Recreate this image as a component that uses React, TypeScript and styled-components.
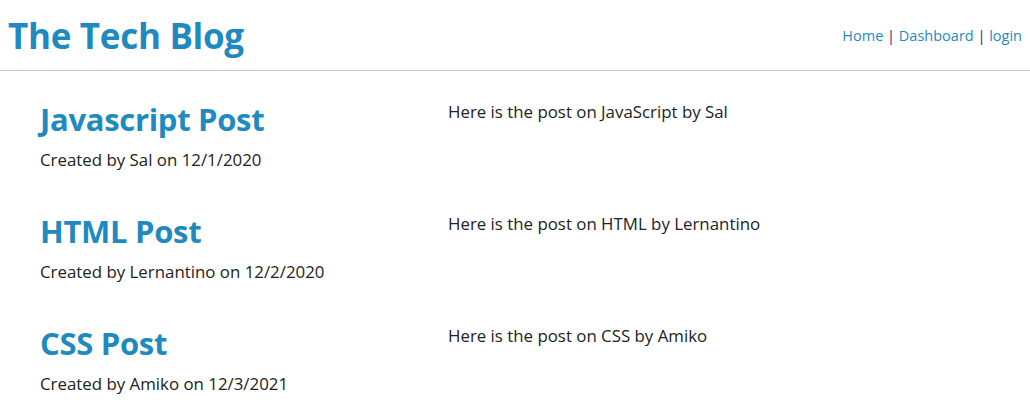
import React from "react";
import styled, { createGlobalStyle } from "styled-components";

const Global = createGlobalStyle`
  html, body { margin: 0; padding: 0; background: #fff; }
  body { font-family: "Open Sans", "Noto Sans", sans-serif; color: #222; }
`;

const Header = styled.header`
  display: flex;
  align-items: center;
  justify-content: space-between;
  height: 70px;
  padding: 0 8px;
  border-bottom: 1px solid #cccccc;
`;

const Brand = styled.h1`
  margin: 0;
  font-size: 35px;
  font-weight: 700;
  color: #1f8ac0;
  letter-spacing: -0.3px;
`;

const Nav = styled.nav`
  font-size: 14.5px;
  color: #3a1a5a;
`;

const NavLink = styled.a`
  color: #1f8ac0;
  text-decoration: none;
`;

const Posts = styled.main`
  display: flex;
  flex-direction: column;
  padding: 26px 40px 0;
`;

const PostRow = styled.article`
  display: grid;
  grid-template-columns: 408px 1fr;
  height: 112px;
`;

const PostHead = styled.div`
  display: flex;
  flex-direction: column;
`;

const PostTitle = styled.h2`
  margin: 0;
  font-size: 31px;
  font-weight: 700;
  color: #1f8ac0;
  line-height: 44px;
  letter-spacing: -0.3px;
`;

const Meta = styled.p`
  margin: 8px 0 0;
  font-size: 16.85px;
  line-height: 22px;
`;

const Body = styled.p`
  margin: 0;
  padding-top: 4px;
  font-size: 16.85px;
  line-height: 22px;
`;

const posts = [
  { title: "Javascript Post", meta: "Created by Sal on 12/1/2020", body: "Here is the post on JavaScript by Sal" },
  { title: "HTML Post", meta: "Created by Lernantino on 12/2/2020", body: "Here is the post on HTML by Lernantino" },
  { title: "CSS Post", meta: "Created by Amiko on 12/3/2021", body: "Here is the post on CSS by Amiko" },
];

export default function App() {
  return (
    <>
      <Global />
      <Header>
        <Brand>The Tech Blog</Brand>
        <Nav>
          <NavLink href="#">Home</NavLink> | <NavLink href="#">Dashboard</NavLink> | <NavLink href="#">login</NavLink>
        </Nav>
      </Header>
      <Posts>
        {posts.map((p) => (
          <PostRow key={p.title}>
            <PostHead>
              <PostTitle>{p.title}</PostTitle>
              <Meta>{p.meta}</Meta>
            </PostHead>
            <Body>{p.body}</Body>
          </PostRow>
        ))}
      </Posts>
    </>
  );
}
